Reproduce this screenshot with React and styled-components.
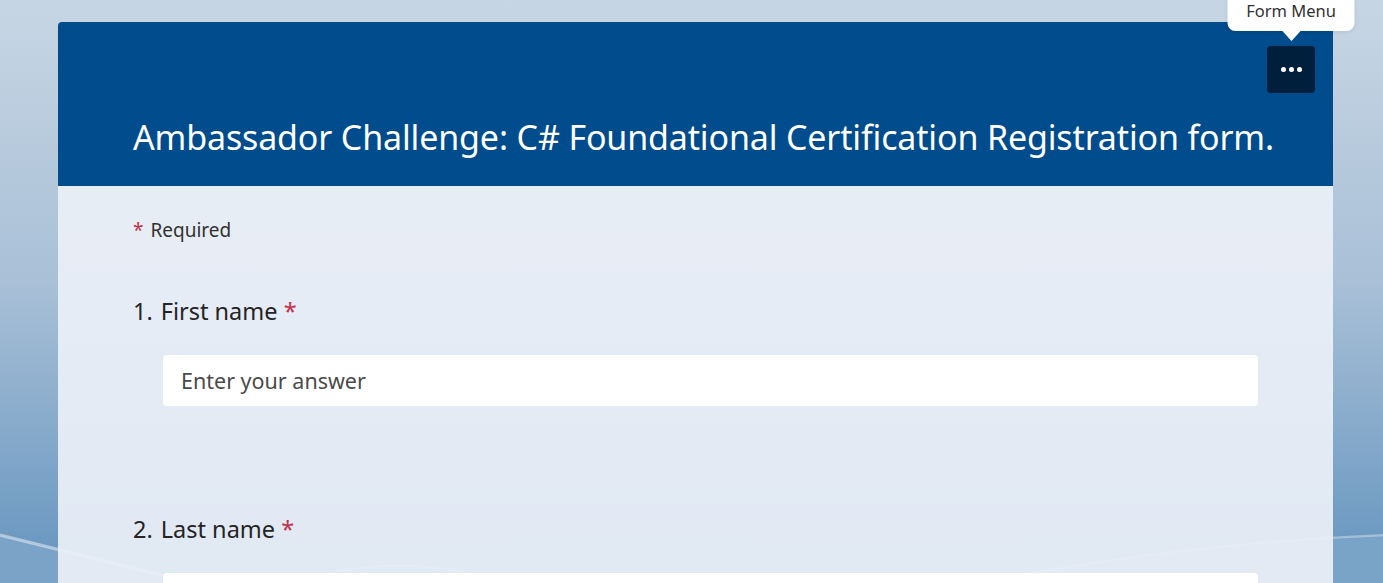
import styled, { createGlobalStyle } from "styled-components";

const GlobalStyle = createGlobalStyle`
  html, body {
    margin: 0;
    padding: 0;
  }
  body {
    font-family: "Noto Sans", "Open Sans", sans-serif;
    overflow: hidden;
  }
`;

const Page = styled.div`
  position: relative;
  min-height: 100vh;
  padding: 22px 50px 0 58px;
  box-sizing: border-box;
  background: linear-gradient(180deg, #c7d6e4 0%, #a9c0d7 45%, #6b98c1 88%, #6a96c0 100%);
  overflow: hidden;
`;

const Backdrop = styled.svg`
  position: absolute;
  inset: 0;
  width: 100%;
  height: 100%;
  pointer-events: none;
`;

const Card = styled.div`
  position: relative;
  width: 1275px;
  border-radius: 4px 4px 0 0;
  background: rgba(235, 240, 247, 0.92);
`;

const Header = styled.div`
  display: flex;
  flex-direction: column;
  height: 164px;
  box-sizing: border-box;
  padding: 24px 18px 0 75px;
  background: #004c8c;
  border-radius: 4px 4px 0 0;
`;

const HeaderTools = styled.div`
  display: flex;
  justify-content: flex-end;
`;

const MenuWrap = styled.div`
  position: relative;
`;

const MenuButton = styled.button`
  display: flex;
  align-items: center;
  justify-content: center;
  gap: 3px;
  width: 48px;
  height: 47px;
  padding: 0;
  border: none;
  border-radius: 4px;
  background: #001f3d;
  cursor: pointer;
`;

const Dot = styled.span`
  width: 5px;
  height: 5px;
  border-radius: 50%;
  background: #fff;
`;

const Tooltip = styled.div`
  position: absolute;
  bottom: 62px;
  left: 50%;
  transform: translateX(-50%);
  width: 127px;
  padding: 10px 0 10px;
  box-sizing: border-box;
  border-radius: 8px;
  background: #fff;
  color: #323130;
  font-size: 16.5px;
  line-height: 20px;
  text-align: center;
  white-space: nowrap;
  box-shadow: 0 1px 4px rgba(0, 0, 0, 0.08);

  &::after {
    content: "";
    position: absolute;
    left: 50%;
    bottom: -10px;
    margin-left: -10px;
    border-left: 10px solid transparent;
    border-right: 10px solid transparent;
    border-top: 11px solid #fff;
  }
`;

const Title = styled.h1`
  margin: 22px 0 0;
  color: #fff;
  font-size: 34px;
  font-weight: 400;
  line-height: 44px;
  letter-spacing: -0.15px;
  white-space: nowrap;
`;

const Body = styled.div`
  padding: 30px 75px 0;
`;

const Required = styled.div`
  display: flex;
  align-items: center;
  gap: 7px;
  color: #323130;
  font-size: 19px;
  line-height: 28px;
`;

const Star = styled.span`
  color: #c4314b;
`;

const Question = styled.div`
  display: flex;
  flex-direction: column;
  padding-top: ${(p) => p.$top}px;
`;

const QuestionTitle = styled.div`
  display: flex;
  gap: 8px;
  color: #242424;
  font-size: 23.5px;
  line-height: 32px;
`;

const Answer = styled.input`
  box-sizing: border-box;
  width: 1095px;
  height: 51px;
  margin: 28px 0 0 30px;
  padding: 0 18px;
  border: none;
  border-radius: 4px;
  background: #fff;
  color: #242424;
  font-family: inherit;
  font-size: 21.5px;
  outline: none;

  &::placeholder {
    color: #4a4a4a;
  }
`;

const questions = [
  { n: 1, label: "First name", top: 51 },
  { n: 2, label: "Last name", top: 107 },
];

const App = () => {
  return (
    <Page>
      <GlobalStyle />
      <Backdrop viewBox="0 0 1383 583" preserveAspectRatio="none">
        <path d="M0 500 Q 320 575 640 640 L 0 640 Z" fill="#7ba3c8" />
        <path d="M0 500 Q 320 575 640 640" fill="none" stroke="rgba(255,255,255,0.45)" strokeWidth="3" />
        <path d="M700 620 Q 1000 515 1383 500 L 1383 640 Z" fill="#7aa3c8" />
        <path d="M700 620 Q 1000 515 1383 500" fill="none" stroke="rgba(255,255,255,0.35)" strokeWidth="2" />
        <path d="M220 580 Q 420 460 660 620" fill="none" stroke="rgba(255,255,255,0.35)" strokeWidth="2" />
      </Backdrop>
      <Card>
        <Header>
          <HeaderTools>
            <MenuWrap>
              <Tooltip>Form Menu</Tooltip>
              <MenuButton aria-label="Form Menu">
                <Dot />
                <Dot />
                <Dot />
              </MenuButton>
            </MenuWrap>
          </HeaderTools>
          <Title>Ambassador Challenge: C# Foundational Certification Registration form.</Title>
        </Header>
        <Body>
          <Required>
            <Star>*</Star>
            Required
          </Required>
          {questions.map((q) => (
            <Question key={q.n} $top={q.top}>
              <QuestionTitle>
                <span>{q.n}.</span>
                <span>
                  {q.label} <Star>*</Star>
                </span>
              </QuestionTitle>
              <Answer placeholder="Enter your answer" />
            </Question>
          ))}
        </Body>
      </Card>
    </Page>
  );
};

export default App;
